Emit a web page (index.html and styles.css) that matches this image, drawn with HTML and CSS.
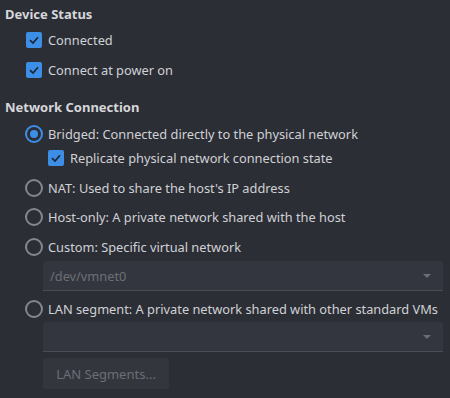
FILE: index.html
```html
<!DOCTYPE html>
<html>
<head>
  <meta charset="utf-8">
  <title>Network Adapter</title>
  <link rel="stylesheet" href="styles.css">
</head>
<body>
  <div class="page">
    <!-- Device status -->
    <div class="group-title">Device Status</div>
    <label class="option first">
      <span class="check on"><svg viewBox="0 0 16 16"><path d="M4 8.2 L7 11 L12 5.2"/></svg></span>
      <span class="text">Connected</span>
    </label>
    <label class="option second">
      <span class="check on"><svg viewBox="0 0 16 16"><path d="M4 8.2 L7 11 L12 5.2"/></svg></span>
      <span class="text">Connect at power on</span>
    </label>

    <!-- Network connection -->
    <div class="group-title net">Network Connection</div>
    <label class="option bridged">
      <span class="radio on"></span>
      <span class="text">Bridged: Connected directly to the physical network</span>
    </label>
    <label class="option sub">
      <span class="check on"><svg viewBox="0 0 16 16"><path d="M4 8.2 L7 11 L12 5.2"/></svg></span>
      <span class="text">Replicate physical network connection state</span>
    </label>
    <label class="option nat">
      <span class="radio"></span>
      <span class="text">NAT: Used to share the host's IP address</span>
    </label>
    <label class="option host">
      <span class="radio"></span>
      <span class="text">Host-only: A private network shared with the host</span>
    </label>
    <label class="option custom">
      <span class="radio"></span>
      <span class="text">Custom: Specific virtual network</span>
    </label>
    <div class="select">
      <span class="value">/dev/vmnet0</span>
      <span class="arrow"></span>
    </div>
    <label class="option lan">
      <span class="radio"></span>
      <span class="text">LAN segment: A private network shared with other standard VMs</span>
    </label>
    <div class="select lan-select">
      <span class="value"></span>
      <span class="arrow"></span>
    </div>
    <button class="btn" disabled>LAN Segments...</button>
  </div>
</body>
</html>
```

FILE: styles.css
```css
/* dark dialog page */
body {
  margin: 0;
  background-color: #2c2e36;
  font-family: 'Noto Sans', 'DejaVu Sans', sans-serif;
  font-size: 12.8px;
  color: #d0d1d4;
}
.page {
  display: flex;
  flex-direction: column;
  padding: 4px 7px 0 5px;
}
.group-title {
  font-weight: bold;
  font-size: 13px;
  line-height: 20px;
  color: #d6d7da;
}
.group-title.net {
  margin-top: 13px;
}
.option {
  display: flex;
  align-items: center;
  height: 28px;
  padding-left: 20px;
}
.option.first { margin-top: 2px; }
.option.second { margin-top: 2px; }
.option.bridged { margin-top: 3px; }
.option.sub {
  height: 20px;
  padding-left: 42px;
}
.option.nat { margin-top: 6px; }
.option.host { margin-top: 1px; }
.option.custom { margin-top: 2px; }
.option.lan {
  margin-top: 5px;
  height: 26px;
}
.text {
  margin-left: 6px;
  white-space: nowrap;
}
.check {
  width: 16px;
  height: 16px;
  margin-left: 1px;
  border-radius: 2px;
  background-color: #3d8ee6;
  display: flex;
}
.check svg {
  width: 16px;
  height: 16px;
  fill: none;
  stroke: #1b2432;
  stroke-width: 1.6;
}
.radio {
  box-sizing: border-box;
  width: 18px;
  height: 18px;
  border: 2px solid #85878c;
  border-radius: 50%;
  display: flex;
  align-items: center;
  justify-content: center;
}
.radio + .text {
  margin-left: 5px;
}
.radio.on {
  border-color: #3d8ee6;
}
.radio.on::after {
  content: "";
  width: 8px;
  height: 8px;
  border-radius: 50%;
  background-color: #3d8ee6;
}
.select {
  box-sizing: border-box;
  display: flex;
  align-items: center;
  justify-content: space-between;
  height: 30px;
  margin-left: 38px;
  padding: 0 12px 0 7px;
  background-color: #33363e;
  border-bottom: 1px solid #4a4d55;
  border-radius: 3px 3px 0 0;
  color: #6c6f77;
}
.arrow {
  width: 0;
  height: 0;
  border-left: 4px solid transparent;
  border-right: 4px solid transparent;
  border-top: 4px solid #6a6d75;
}
.btn {
  align-self: flex-start;
  margin: 6px 0 0 38px;
  width: 126px;
  height: 31px;
  border: none;
  border-radius: 3px;
  background-color: #34363e;
  color: #6b6e76;
  font-family: inherit;
  font-size: 13px;
}
```
